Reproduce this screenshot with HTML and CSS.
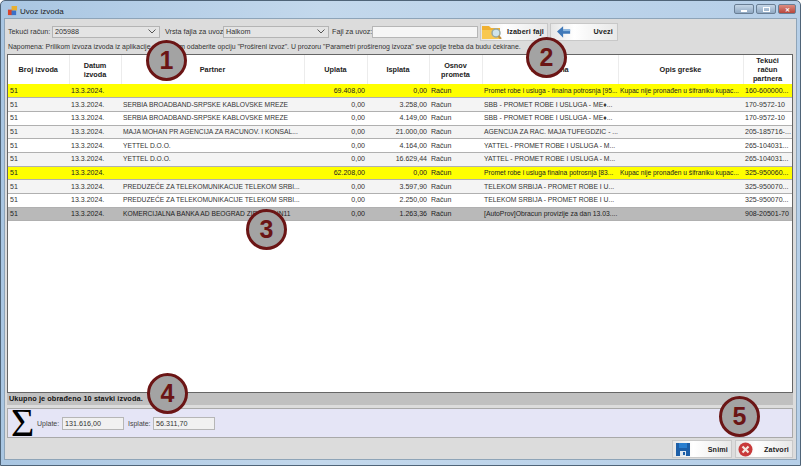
FILE: index.html
```html
<!DOCTYPE html>
<html lang="sr">
<head>
<meta charset="utf-8">
<title>Uvoz izvoda</title>
<link rel="stylesheet" href="styles.css">
</head>
<body>
<div class="window">
  <header class="titlebar">
    <svg class="appicon" width="11" height="10" viewBox="0 0 12 11"><rect x="1" y="4" width="5" height="6" fill="#d8442c"/><rect x="5" y="0" width="6" height="5" fill="#e8b030"/><rect x="5" y="5" width="5" height="5" fill="#3a70c8"/></svg>
    <span class="title">Uvoz izvoda</span>
    <div class="winbtns">
      <span class="winbtn"><i class="min"></i></span>
      <span class="winbtn"><i class="max"></i></span>
      <span class="winbtn close">✕</span>
    </div>
  </header>
  <main class="client">
    <div class="toolbar">
      <label class="lbl lbl-racun">Tekući račun:</label>
      <div class="combo combo-a"><span>205988</span><svg width="8" height="5" viewBox="0 0 8 5"><path d="M.5 .5 4 4 7.500 .5" fill="none" stroke="#555"/></svg></div>
      <label class="lbl lbl-vrsta">Vrsta fajla za uvoz:</label>
      <div class="combo combo-b"><span>Halkom</span><svg width="8" height="5" viewBox="0 0 8 5"><path d="M.5 .5 4 4 7.500 .5" fill="none" stroke="#555"/></svg></div>
      <label class="lbl lbl-fajl">Fajl za uvoz:</label>
      <div class="field field-file"></div>
      <button class="btn btn-file">
        <svg width="20" height="15" viewBox="0 0 20 15"><path d="M0 2h7l2 2h9v11H0z" fill="#f0b030"/><path d="M0 6h18v9H0z" fill="#f8c850"/><circle cx="14" cy="9" r="4" fill="#cfe4ec" stroke="#98a8a0" stroke-width="1.500"/><path d="M16.500 12 19 15" stroke="#c09040" stroke-width="2"/></svg>
        <span>Izaberi fajl</span>
      </button>
      <button class="btn btn-uvezi">
        <svg width="14" height="12" viewBox="0 0 16 13"><path d="M0 6 7 0v3.500h8v5H7V13z" fill="#3f78b8"/><path d="M7 3.500h8v2H7z" fill="#8db8e0"/></svg>
        <span>Uvezi</span>
      </button>
    </div>
    <p class="note">Napomena: Prilikom izvoza izvoda iz aplikacije za Halkom odaberite opciju "Prošireni izvoz". U prozoru "Parametri proširenog izvoza" sve opcije treba da budu čekirane.</p>

    <section class="gridbox">
      <table class="grid">
        <colgroup>
          <col class="c1"><col class="c2"><col class="c3"><col class="c4"><col class="c5"><col class="c6"><col class="c7"><col class="c8"><col class="c9">
        </colgroup>
        <thead>
          <tr>
            <th>Broj izvoda</th><th>Datum<br>izvoda</th><th>Partner</th><th>Uplata</th><th>Isplata</th><th>Osnov<br>prometa</th><th>Napomena</th><th>Opis greške</th><th>Tekući<br>račun<br>partnera</th>
          </tr>
        </thead>
        <tbody>
          <tr class="warn"><td>51</td><td>13.3.2024.</td><td></td><td class="num">69.408,00</td><td class="num">0,00</td><td>Račun</td><td class="tight">Promet robe i usluga - finalna potrosnja [95...</td><td class="tight">Kupac nije pronađen u šifraniku kupac...</td><td>160-600000...</td></tr>
          <tr class="alt"><td>51</td><td>13.3.2024.</td><td>SERBIA BROADBAND-SRPSKE KABLOVSKE MREZE</td><td class="num">0,00</td><td class="num">3.258,00</td><td>Račun</td><td>SBB - PROMET ROBE I USLUGA - ME♦...</td><td></td><td>170-9572-10</td></tr>
          <tr><td>51</td><td>13.3.2024.</td><td>SERBIA BROADBAND-SRPSKE KABLOVSKE MREZE</td><td class="num">0,00</td><td class="num">4.149,00</td><td>Račun</td><td>SBB - PROMET ROBE I USLUGA - ME♦...</td><td></td><td>170-9572-10</td></tr>
          <tr class="alt"><td>51</td><td>13.3.2024.</td><td>MAJA MOHAN PR AGENCIJA ZA RACUNOV. I KONSAL...</td><td class="num">0,00</td><td class="num">21.000,00</td><td>Račun</td><td>AGENCIJA ZA RAC. MAJA TUFEGDZIC - ...</td><td></td><td>205-185716-...</td></tr>
          <tr><td>51</td><td>13.3.2024.</td><td>YETTEL D.O.O.</td><td class="num">0,00</td><td class="num">4.164,00</td><td>Račun</td><td>YATTEL - PROMET ROBE I USLUGA - M...</td><td></td><td>265-104031...</td></tr>
          <tr class="alt"><td>51</td><td>13.3.2024.</td><td>YETTEL D.O.O.</td><td class="num">0,00</td><td class="num">16.629,44</td><td>Račun</td><td>YATTEL - PROMET ROBE I USLUGA - M...</td><td></td><td>265-104031...</td></tr>
          <tr class="warn"><td>51</td><td>13.3.2024.</td><td></td><td class="num">62.208,00</td><td class="num">0,00</td><td>Račun</td><td class="tight">Promet robe i usluga finalna potrosnja [83...</td><td class="tight">Kupac nije pronađen u šifraniku kupac...</td><td>325-950060...</td></tr>
          <tr class="alt"><td>51</td><td>13.3.2024.</td><td>PREDUZEĆE ZA TELEKOMUNIKACIJE TELEKOM SRBI...</td><td class="num">0,00</td><td class="num">3.597,90</td><td>Račun</td><td>TELEKOM SRBIJA - PROMET ROBE I U...</td><td></td><td>325-950070...</td></tr>
          <tr><td>51</td><td>13.3.2024.</td><td>PREDUZEĆE ZA TELEKOMUNIKACIJE TELEKOM SRBI...</td><td class="num">0,00</td><td class="num">2.250,00</td><td>Račun</td><td>TELEKOM SRBIJA - PROMET ROBE I U...</td><td></td><td>325-950070...</td></tr>
          <tr class="sel"><td>51</td><td>13.3.2024.</td><td>KOMERCIJALNA BANKA AD BEOGRAD ZIRO RSUN11</td><td class="num">0,00</td><td class="num">1.263,36</td><td>Račun</td><td>[AutoProv]Obracun provizije za dan 13.03....</td><td></td><td>908-20501-70</td></tr>
        </tbody>
      </table>
    </section>

    <div class="status">Ukupno je obrađeno 10 stavki izvoda.</div>

    <div class="totals">
      <span class="sigma">Σ</span>
      <label class="tlbl">Uplate:</label><div class="field tfield">131.616,00</div>
      <label class="tlbl tlbl2">Isplate:</label><div class="field tfield">56.311,70</div>
    </div>

    <footer class="actions">
      <button class="btn btn-save">
        <svg width="14" height="13" viewBox="0 0 14 13"><rect width="14" height="13" fill="#1d5fa8"/><rect x="3" y="0" width="8" height="5" fill="#2a7fd0"/><rect x="4" y="8" width="6" height="5" fill="#dfe8f0"/><rect x="7" y="9" width="2" height="3" fill="#1d5fa8"/></svg>
        <span>Snimi</span>
      </button>
      <button class="btn btn-close">
        <svg width="15" height="15" viewBox="0 0 15 15"><circle cx="7.500" cy="7.500" r="7" fill="#c83a3a"/><path d="M4.500 4.500l6 6m0-6-6 6" stroke="#f4e8e0" stroke-width="2.200"/></svg>
        <span>Zatvori</span>
      </button>
    </footer>
  </main>
</div>
<div class="marker m1">1</div>
<div class="marker m2">2</div>
<div class="marker m3">3</div>
<div class="marker m4">4</div>
<div class="marker m5">5</div>
</body>
</html>
```
FILE: styles.css
```css
* { box-sizing: border-box; }
html, body { margin: 0; padding: 0; }
body {
  width: 801px; height: 466px; overflow: hidden; position: relative;
  font-family: "Liberation Sans", Arial, sans-serif; font-size: 7px; color: #333;
  background: #fff;
}
.window {
  width: 801px; height: 466px; display: flex; flex-direction: column;
  background: linear-gradient(90deg, #a9c6e2, #c3d8ec 40%, #b6cfe8);
  border: 1px solid #4f6478; border-radius: 5px 5px 0 0;
  padding: 0 3px 5px;
}
.titlebar { height: 17px; flex: none; display: flex; align-items: center; padding: 3px 0 0 3px; gap: 2px; }
.title { font-size: 8px; color: #222; padding-top: 1px; }
.winbtns { margin-left: auto; display: flex; gap: 2px; margin-top: -4px; margin-right: 1px; }
.winbtn {
  width: 20px; height: 10px; border: 1px solid #6a7f95; border-radius: 2px;
  background: linear-gradient(#c5d6e7, #8fa8c2); display: flex; align-items: center; justify-content: center;
}
.winbtn i.min { width: 6px; height: 2px; background: #fff; margin-top: 3px; }
.winbtn i.max { width: 7px; height: 5px; border: 1px solid #fff; }
.winbtn.close { width: 18px; background: linear-gradient(#dc8c80, #b8473c); color: #fff; font-size: 6px; font-weight: bold; }
.client {
  flex: 1; min-height: 0; background: #dcdcdc; border: 1px solid #8ea4b8;
  padding: 0 3px 0 2px; display: flex; flex-direction: column;
}
.toolbar { height: 22px; flex: none; display: flex; align-items: center; padding-top: 3px; }
.lbl { font-size: 7.2px; white-space: nowrap; }
.lbl-racun { width: 45px; padding-left: 1px; }
.combo {
  height: 12px; border: 1px solid #b4b4b4; background: #e4e4e4; display: flex; align-items: center;
  justify-content: space-between; padding: 0 3px 0 2px; font-size: 7.2px;
}
.combo-a { width: 108px; }
.combo-b { width: 106px; }
.lbl-vrsta { margin-left: 5px; width: 58px; }
.lbl-fajl { margin-left: 3px; width: 40px; }
.field { background: #f1f1f1; border: 1px solid #b6b6b6; height: 12px; }
.field-file { width: 106px; background: #f6f6f6; }
.btn {
  display: flex; align-items: center; justify-content: space-between; font: bold 7.2px "Liberation Sans", Arial, sans-serif;
  letter-spacing: .15px; color: #222; border: 1px solid #c8c8c8; padding: 0 3px 0 1px; height: 18px;
  background: linear-gradient(90deg, #e6e6e6, #fff 35%, #e8e8e8);
}
.btn-file { width: 68px; margin-left: 2px; }
.btn-uvezi { width: 68px; margin-left: 2px; padding: 0 4px 0 6px; }
.note { margin: 0; height: 13px; flex: none; font-size: 6.9px; line-height: 11px; padding-left: 1px; white-space: nowrap; }
.gridbox { flex: none; height: 339px; background: #fff; border: 1px solid #666; overflow: hidden; }
.grid { border-collapse: collapse; table-layout: fixed; width: 784px; }
.c1 { width: 61px; } .c2 { width: 52px; } .c3 { width: 183px; } .c4 { width: 63px; } .c5 { width: 62px; }
.c6 { width: 53px; } .c7 { width: 136px; } .c8 { width: 125px; } .c9 { width: 49px; }
.grid th {
  height: 29px; padding: 0 1px; font-size: 7.3px; font-weight: bold; line-height: 9px; text-align: center;
  background: #fff; border-right: 1px solid #ececec; color: #222; overflow: hidden;
}
.grid td {
  height: 13.7px; padding: 0 2px; font-size: 7.05px; line-height: 10px; white-space: nowrap; overflow: hidden;
  border-bottom: 1px solid #b0b0b0; color: #333;
}
.grid td:nth-child(3) { font-size: 6.7px; }
.grid td:nth-child(7) { font-size: 6.8px; }
.grid td.tight { font-size: 6.7px; }
.grid td.num { text-align: right; }
.grid tr.alt td { background: #f4f4f4; }
.grid tr.warn td { background: #ffff00; color: #222; }
.grid tr.sel td { background: #b9b9b9; color: #222; }
.status { height: 12px; flex: none; background: #c0c0c0; font-weight: bold; font-size: 7.3px; letter-spacing: .1px; line-height: 12px; padding-left: 2px; color: #111; }
.totals {
  height: 30px; margin-top: 3px; flex: none; background: #e5e5f6; border: 1px solid #a9a9a9; display: flex; align-items: center;
  padding-left: 3px;
}
.sigma { font: 40px/28px "Liberation Serif", serif; color: #000; width: 26px; }
.tlbl { font-size: 7px; width: 25px; color: #444; }
.tlbl2 { margin-left: 4px; }
.tfield { width: 62px; padding-left: 2px; line-height: 11px; height: 13px; font-size: 7.2px; }
.actions { flex: 1; display: flex; justify-content: flex-end; align-items: center; gap: 3px; padding-top: 1px; }
.btn-save { width: 60px; padding: 0 3px; }
.btn-close { width: 58px; padding: 0 3px 0 2px; }
.marker {
  position: absolute; width: 41px; height: 41px; border-radius: 50%; background: #a3a3a3;
  border: 3px solid #6b1515; color: #6b1515; font: bold 25px/35px "Liberation Sans", Arial, sans-serif; text-align: center;
}
.m1 { left: 146px; top: 40px; }
.m2 { left: 526px; top: 37px; }
.m3 { left: 246px; top: 209px; }
.m4 { left: 147px; top: 373px; }
.m5 { left: 719px; top: 396px; }
```
